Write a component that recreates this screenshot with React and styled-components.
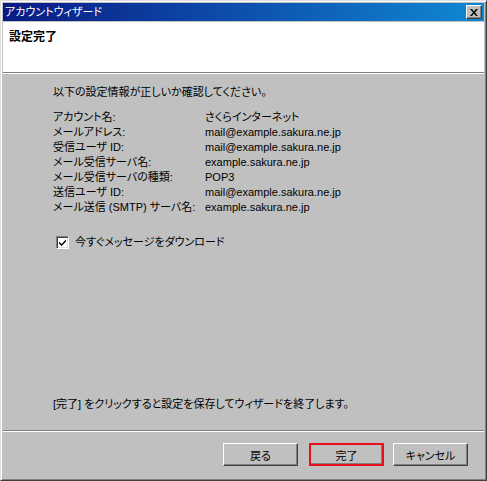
import React from "react";
import styled, { createGlobalStyle } from "styled-components";

const GlobalStyle = createGlobalStyle`
  html, body { margin: 0; padding: 0; background: #c0c0c0; }
  body {
    font-family: "Liberation Sans", "Noto Sans CJK JP", sans-serif;
    font-size: 11px;
    color: #000;
  }
  * { box-sizing: border-box; }
`;

const rows = [
  ["アカウント名:", "さくらインターネット"],
  ["メールアドレス:", "mail@example.sakura.ne.jp"],
  ["受信ユーザ ID:", "mail@example.sakura.ne.jp"],
  ["メール受信サーバ名:", "example.sakura.ne.jp"],
  ["メール受信サーバの種類:", "POP3"],
  ["送信ユーザ ID:", "mail@example.sakura.ne.jp"],
  ["メール送信 (SMTP) サーバ名:", "example.sakura.ne.jp"],
];

function CloseIcon() {
  return (
    <svg width="8" height="7" viewBox="0 0 8 7">
      <path d="M0 0h2l2 2.5L6 0h2L5 3.5 8 7H6L4 4.5 2 7H0l3-3.5z" fill="#000" />
    </svg>
  );
}

function CheckIcon() {
  return (
    <svg width="9" height="9" viewBox="0 0 9 9">
      <path d="M1 3.5l2.5 2.5L8 1.5v2L3.5 8 1 5.5z" fill="#000" />
    </svg>
  );
}

export default function App() {
  return (
    <>
      <GlobalStyle />
      <Window>
        <TitleBar>
          <TitleText>アカウントウィザード</TitleText>
          <CloseButton><CloseIcon /></CloseButton>
        </TitleBar>
        <Header>
          <HeaderTitle>設定完了</HeaderTitle>
        </Header>
        <Body>
          <Lead>以下の設定情報が正しいか確認してください。</Lead>
          <InfoGrid>
            {rows.map(([label, value]) => (
              <React.Fragment key={label}>
                <Cell>{label}</Cell>
                <Cell>{value}</Cell>
              </React.Fragment>
            ))}
          </InfoGrid>
          <CheckRow>
            <CheckBox><CheckIcon /></CheckBox>
            <span>今すぐメッセージをダウンロード</span>
          </CheckRow>
          <Note>[完了] をクリックすると設定を保存してウィザードを終了します。</Note>
        </Body>
        <Footer>
          <Button $gap={11}>戻る</Button>
          <Button $gap={9} $marked>完了</Button>
          <Button>キャンセル</Button>
        </Footer>
      </Window>
    </>
  );
}

const Window = styled.div`
  width: 487px;
  height: 481px;
  display: flex;
  flex-direction: column;
  background: #c0c0c0;
  border-top: 1px solid #dfdfdf;
  border-left: 1px solid #dfdfdf;
  border-right: 1px solid #404040;
  border-bottom: 1px solid #404040;
  box-shadow: inset 1px 1px #fff, inset -1px -1px #808080;
  padding: 2px;
`;

const TitleBar = styled.div`
  height: 18px;
  flex: none;
  display: flex;
  align-items: center;
  justify-content: space-between;
  padding: 0 2px;
  background: linear-gradient(to right, #0a1a84, #1088d4);
`;

const TitleText = styled.span`
  color: #fff;
  font-size: 11px;
  line-height: 18px;
  font-feature-settings: "palt";
`;

const CloseButton = styled.div`
  width: 16px;
  height: 14px;
  display: flex;
  align-items: center;
  justify-content: center;
  background: #c0c0c0;
  border-top: 1px solid #fff;
  border-left: 1px solid #fff;
  border-right: 1px solid #404040;
  border-bottom: 1px solid #404040;
  box-shadow: inset -1px -1px #808080;
`;

const Header = styled.div`
  height: 51px;
  flex: none;
  margin-top: 1px;
  background: #fff;
  border-bottom: 1px solid #808080;
  box-shadow: 0 1px #fff;
  padding: 6px 6px;
`;

const HeaderTitle = styled.div`
  font-family: "Noto Sans CJK JP", sans-serif;
  font-weight: bold;
  font-size: 12px;
  line-height: 15px;
`;

const Body = styled.div`
  flex: 1;
  display: flex;
  flex-direction: column;
  padding: 12px 0 18px 50px;
  border-bottom: 1px solid #808080;
  box-shadow: 0 1px #fff;
  font-feature-settings: "palt";
  line-height: 15px;
`;

const Lead = styled.div`
  margin-bottom: 10px;
`;

const InfoGrid = styled.div`
  display: grid;
  grid-template-columns: 152px auto;
  grid-auto-rows: 15px;
`;

const Cell = styled.div`
  white-space: nowrap;
  line-height: 15px;
`;

const CheckRow = styled.div`
  display: flex;
  align-items: center;
  gap: 6px;
  margin: 20px 0 0 3px;
`;

const CheckBox = styled.div`
  width: 13px;
  height: 13px;
  display: flex;
  align-items: center;
  justify-content: center;
  background: #fff;
  border-top: 1px solid #808080;
  border-left: 1px solid #808080;
  border-right: 1px solid #fff;
  border-bottom: 1px solid #fff;
  box-shadow: inset 1px 1px #404040, inset -1px -1px #dfdfdf;
`;

const Note = styled.div`
  margin-top: auto;
`;

const Footer = styled.div`
  flex: none;
  display: flex;
  justify-content: flex-end;
  padding: 12px 16px 12px 0;
`;

const Button = styled.div`
  width: 75px;
  height: 23px;
  margin-right: ${(p) => p.$gap || 0}px;
  display: flex;
  align-items: center;
  justify-content: center;
  font-size: 11px;
  font-feature-settings: "palt";
  background: #c0c0c0;
  border-top: ${(p) => (p.$marked ? "2px solid #e8101c" : "1px solid #fff")};
  border-left: ${(p) => (p.$marked ? "2px solid #e8101c" : "1px solid #fff")};
  border-right: ${(p) => (p.$marked ? "2px solid #e8101c" : "1px solid #404040")};
  border-bottom: ${(p) => (p.$marked ? "2px solid #e8101c" : "1px solid #404040")};
  box-shadow: inset -1px -1px #808080;
`;
